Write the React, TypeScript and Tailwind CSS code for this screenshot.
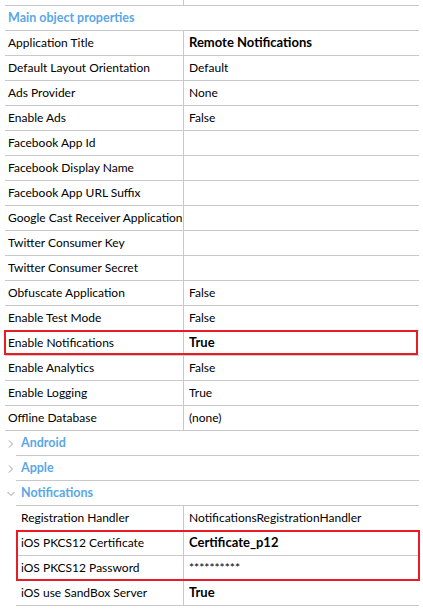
import React from 'react';

type Prop = { label: string; value?: string; bold?: boolean };

const mainProps: Prop[] = [
  { label: 'Application Title', value: 'Remote Notifications', bold: true },
  { label: 'Default Layout Orientation', value: 'Default' },
  { label: 'Ads Provider', value: 'None' },
  { label: 'Enable Ads', value: 'False' },
  { label: 'Facebook App Id' },
  { label: 'Facebook Display Name' },
  { label: 'Facebook App URL Suffix' },
  { label: 'Google Cast Receiver Application' },
  { label: 'Twitter Consumer Key' },
  { label: 'Twitter Consumer Secret' },
  { label: 'Obfuscate Application', value: 'False' },
  { label: 'Enable Test Mode', value: 'False' },
  { label: 'Enable Notifications', value: 'True', bold: true },
  { label: 'Enable Analytics', value: 'False' },
  { label: 'Enable Logging', value: 'True' },
  { label: 'Offline Database', value: '(none)' },
];

const notifProps: Prop[] = [
  { label: 'Registration Handler', value: 'NotificationsRegistrationHandler' },
  { label: 'iOS PKCS12 Certificate', value: 'Certificate_p12', bold: true },
  { label: 'iOS PKCS12 Password', value: '**********' },
  { label: 'iOS use SandBox Server', value: 'True', bold: true },
];

const Row = ({ p, child }: { p: Prop; child?: boolean }) => (
  <div
    className={`relative flex h-[25px] shrink-0 items-center border-b border-[#c9c9c9] ${
      child ? 'ml-[16px] w-[403px]' : 'ml-[5px] w-[414px]'
    }`}
  >
    <div
      className={`flex h-full items-center whitespace-nowrap border-r border-[#c9c9c9] overflow-hidden ${
        child ? 'w-[168px] pl-[5px]' : 'w-[179px] pl-[3px]'
      }`}
    >
      {p.label}
    </div>
    <div className={`pl-[5px] whitespace-nowrap ${p.bold ? 'text-[13px] font-bold' : ''}`}>{p.value}</div>
    {p.label === 'Enable Notifications' && (
      <span className="pointer-events-none absolute left-[-1px] top-[-1px] h-[25px] w-[414px] border-2 border-[#e81c24]" />
    )}
  </div>
);

const Group = ({ title, open }: { title: string; open?: boolean }) => (
  <div className="flex h-[25px] shrink-0 items-center">
    <div className="flex w-[16px] justify-end pr-[1px]">
      <svg width="8" height="8" viewBox="0 0 8 8">
        {open ? (
          <path d="M0.5 2 L4 5.5 L7.5 2" fill="none" stroke="#9a9a9a" strokeWidth="1" />
        ) : (
          <path d="M2 0.5 L5.5 4 L2 7.5" fill="none" stroke="#9a9a9a" strokeWidth="1" />
        )}
      </svg>
    </div>
    <div className="flex h-full w-[403px] items-center border-b border-[#c9c9c9] pl-[5px] text-[12.5px] font-bold text-[#5aa7e6]">
      {title}
    </div>
  </div>
);

export default function App() {
  return (
    <div
      className="h-[609px] w-[423px] overflow-hidden bg-white text-[12px] text-black"
      style={{ fontFamily: 'Lato, "Open Sans", sans-serif' }}
    >
      <div className="ml-[5px] flex h-[6px] w-[414px] border-b border-[#c9c9c9]">
        <div className="w-[179px] border-r border-[#c9c9c9]" />
      </div>
      <div className="ml-[5px] flex h-[25px] w-[414px] items-center border-b border-[#c9c9c9] pl-[3px] text-[12.5px] font-bold text-[#5aa7e6]">
        Main object properties
      </div>
      {mainProps.map((p) => (
        <Row key={p.label} p={p} />
      ))}
      <Group title="Android" />
      <Group title="Apple" />
      <Group title="Notifications" open />
      <div className="relative flex flex-col">
        {notifProps.map((p) => (
          <Row key={p.label} p={p} child />
        ))}
        <span className="pointer-events-none absolute left-[16px] top-[24px] h-[51px] w-[404px] border-2 border-[#e81c24]" />
      </div>
    </div>
  );
}
